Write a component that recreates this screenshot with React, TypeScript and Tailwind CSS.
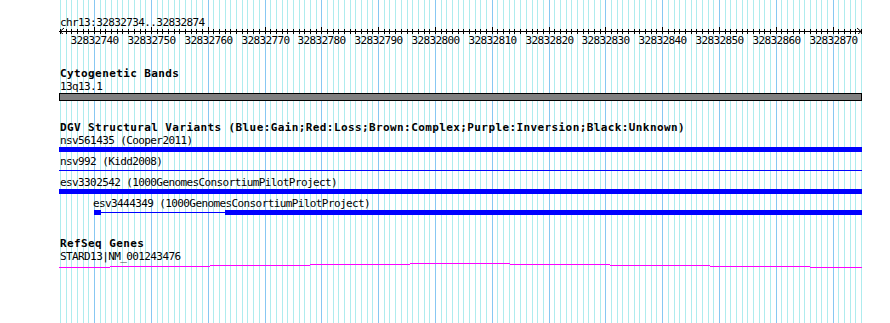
import React from "react";

const START = 32832734;
const BASES = 141;
const X0 = 60;
const STEP = 801 / 141;

const gx = (i: number) => Math.round(X0 + i * STEP);

const mono = "font-['DejaVu_Sans_Mono','Liberation_Mono',monospace] text-[11px] leading-[13px] tracking-[-0.6px] text-black whitespace-pre";
const monoBold = "font-['DejaVu_Sans_Mono','Liberation_Mono',monospace] font-bold text-[11px] leading-[13px] tracking-[0.4px] text-black whitespace-pre";

// intron line of the gene model, drawn as the stepped raster it is in the picture
const intron = [
  [59, 110, 267],
  [110, 210, 266],
  [210, 310, 265],
  [310, 410, 264],
  [410, 510, 263],
  [510, 610, 264],
  [610, 710, 265],
  [710, 810, 266],
  [810, 862, 267],
];

const Grid = () => (
  <svg
    className="absolute inset-0 pointer-events-none"
    width={890}
    height={323}
    shapeRendering="crispEdges"
  >
    {Array.from({ length: BASES + 1 }, (_, i) => (
      <rect
        key={i}
        x={gx(i)}
        y={0}
        width={1}
        height={323}
        fill={(START + i) % 10 === 0 ? "#87c8f2" : "#aeecee"}
      />
    ))}
  </svg>
);

const Ruler = () => {
  const majors = Array.from({ length: BASES + 1 }, (_, i) => i).filter(
    (i) => (START + i) % 10 === 0
  );
  return (
    <div className="flex flex-col">
      <div className={`${mono} h-[11px] pl-[60px]`}>chr13:32832734..32832874</div>
      <svg width={890} height={7} shapeRendering="crispEdges">
        <rect x={59} y={4} width={803} height={1} fill="#000" />
        {Array.from({ length: BASES + 1 }, (_, i) => {
          const major = (START + i) % 10 === 0;
          return (
            <rect
              key={i}
              x={gx(i)}
              y={major ? 0 : 2}
              width={1}
              height={major ? 7 : 5}
              fill="#000"
            />
          );
        })}
        <path d="M64 1 L60 4.5 L64 8" stroke="#000" fill="none" shapeRendering="auto" />
        <path d="M857 1 L861 4.5 L857 8" stroke="#000" fill="none" shapeRendering="auto" />
      </svg>
      <div className="relative h-[13px]">
        {majors.map((i) => (
          <span
            key={i}
            className={`${mono} absolute top-0 -translate-x-1/2`}
            style={{ left: gx(i) + 0.5 }}
          >
            {START + i}
          </span>
        ))}
      </div>
    </div>
  );
};

const Bar = ({ thin }: { thin?: boolean }) =>
  thin ? (
    <div className="h-px w-[803px] bg-[#0000ff]" />
  ) : (
    <div className="h-[5px] w-[803px] bg-[#0000ff]" />
  );

export default function App() {
  return (
    <div className="relative w-[890px] h-[323px] bg-white overflow-hidden">
      <Grid />
      <div className="relative flex flex-col pt-[16px]">
        <Ruler />

        {/* Cytogenetic bands */}
        <div className="ml-[59px] w-[803px] flex flex-col mt-[20px]">
          <div className={`${monoBold} pl-px`}>Cytogenetic Bands</div>
          <div className={`${mono} pl-px`}>13q13.1</div>
          <div className="h-[8px] w-[803px] border border-black bg-[#808080]" />
        </div>

        {/* DGV */}
        <div className="ml-[59px] w-[803px] flex flex-col mt-[20px]">
          <div className={`${monoBold} pl-px`}>
            DGV Structural Variants (Blue:Gain;Red:Loss;Brown:Complex;Purple:Inversion;Black:Unknown)
          </div>
          <div className={`${mono} pl-px`}>nsv561435 (Cooper2011)</div>
          <Bar />
          <div className={`${mono} pl-px mt-[3px]`}>nsv992 (Kidd2008)</div>
          <div className="mt-[2px]">
            <Bar thin />
          </div>
          <div className={`${mono} pl-px mt-[5px]`}>esv3302542 (1000GenomesConsortiumPilotProject)</div>
          <Bar />
          <div className={`${mono} pl-[34px] mt-[3px]`}>esv3444349 (1000GenomesConsortiumPilotProject)</div>
          <div className="flex items-center h-[5px] pl-[35px]">
            <div className="h-[5px] w-[7px] bg-[#0000ff]" />
            <div className="h-px w-[124px] bg-[#0000ff]" />
            <div className="h-[5px] flex-1 bg-[#0000ff]" />
          </div>
        </div>

        {/* RefSeq */}
        <div className="ml-[59px] w-[803px] flex flex-col mt-[22px]">
          <div className={`${monoBold} pl-px`}>RefSeq Genes</div>
          <div className={`${mono} pl-px`}>STARD13|NM_001243476</div>
          <svg width={803} height={5} shapeRendering="crispEdges">
            {intron.map(([a, b, y]) => (
              <rect key={a} x={a - 59} y={y - 263} width={b - a} height={1} fill="#ff00ff" />
            ))}
          </svg>
        </div>
      </div>
    </div>
  );
}
